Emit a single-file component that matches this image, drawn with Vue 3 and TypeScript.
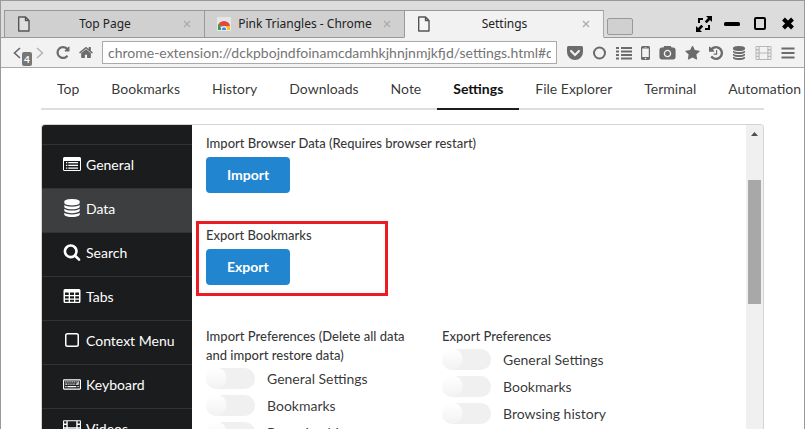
<script setup lang="ts">
import { ref } from 'vue'

interface Tab { title: string; icon: 'page' | 'store'; active: boolean }
interface Tool { name: string; width: number; box: string; path: string; faint?: boolean }
interface MenuEntry { label: string; box: string; path: string; active?: boolean }
interface Option { id: string; label: string; checked: boolean }

const databasePath =
  'M896 768q237 0 443-43t325-127v170q0 69-103 128t-280 93.5-385 34.5-385-34.5-280-93.5-103-128v-170q119 84 325 127t443 43zm0 768q237 0 443-43t325-127v170q0 69-103 128t-280 93.5-385 34.5-385-34.5-280-93.5-103-128v-170q119 84 325 127t443 43zm0-384q237 0 443-43t325-127v170q0 69-103 128t-280 93.5-385 34.5-385-34.5-280-93.5-103-128v-170q119 84 325 127t443 43zm0-1152q208 0 385 34.5t280 93.5 103 128v128q0 69-103 128t-280 93.5-385 34.5-385-34.5-280-93.5-103-128v-128q0-69 103-128t280-93.5 385-34.5z'
const filmPath =
  'M1 0h14a1 1 0 0 1 1 1v12a1 1 0 0 1-1 1H1a1 1 0 0 1-1-1V1a1 1 0 0 1 1-1zM1 1v2h2V1zM1 4.400v2h2v-2zM1 7.700v2h2v-2zM1 11v2h2v-2zM13 1v2h2V1zM13 4.400v2h2v-2zM13 7.700v2h2v-2zM13 11v2h2v-2zM4.200 1v5.400h7.600V1zM4.200 7.600V13h7.600V7.600z'

const tabs: Tab[] = [
  { title: 'Top Page', icon: 'page', active: false },
  { title: 'Pink Triangles - Chrome', icon: 'store', active: false },
  { title: 'Settings', icon: 'page', active: true },
]

const tools: Tool[] = [
  { name: 'Pocket', width: 16, box: '0 0 16 14', path: 'M1.500 0h13A1.500 1.500 0 0 1 16 1.500V6a8 8 0 0 1-16 0V1.500A1.500 1.500 0 0 1 1.500 0zM4.800 4.200a1 1 0 0 0-1.500 1.500L8 10.400l4.700-4.700a1 1 0 0 0-1.500-1.500L8 7.400z' },
  { name: 'Circle', width: 15, box: '0 0 15 14', path: 'M7.500.5a6.500 6.500 0 1 1 0 13 6.500 6.500 0 0 1 0-13zm0 2a4.500 4.500 0 1 0 0 9 4.500 4.500 0 0 0 0-9z' },
  { name: 'List', width: 16, box: '0 0 16 14', path: 'M0 1h3v2H0zM5 1h11v2H5zM0 4.500h3v2H0zM5 4.500h11v2H5zM0 8h3v2H0zM5 8h11v2H5zM0 11.500h3v2H0zM5 11.500h11v2H5z' },
  { name: 'Mobile', width: 9, box: '0 0 9 14', path: 'M1.500 0h6A1.500 1.500 0 0 1 9 1.500v11A1.500 1.500 0 0 1 7.500 14h-6A1.500 1.500 0 0 1 0 12.500v-11A1.500 1.500 0 0 1 1.500 0zM1.200 2.500V11h6.600V2.500zM3.500 1v.6h2V1zM4.500 11.700a.8.8 0 1 0 0 1.600.8.8 0 0 0 0-1.600z' },
  { name: 'Screenshot', width: 17, box: '-64 64 1920 1664', path: 'M896 672q119 0 203.5 84.5t84.5 203.5-84.5 203.5-203.5 84.5-203.5-84.5-84.5-203.5 84.5-203.5 203.5-84.5zm704-416q106 0 181 75t75 181v896q0 106-75 181t-181 75h-1408q-106 0-181-75t-75-181v-896q0-106 75-181t181-75h224l51-136q19-49 69.5-84.5t103.5-35.5h512q53 0 103.5 35.5t69.5 84.5l51 136h224zm-704 1152q185 0 316.5-131.5t131.5-316.5-131.5-316.5-316.5-131.5-316.5 131.5-131.5 316.5 131.5 316.5 316.5 131.5z' },
  { name: 'Favorite', width: 15, box: '64 64 1664 1600', path: 'M1728 647q0 22-26 48l-363 354 86 500q1 7 1 20 0 21-10.5 35.5t-30.5 14.5q-19 0-40-12l-449-236-449 236q-22 12-40 12-21 0-31.500-14.500t-10.500-35.500q0-6 2-20l86-500-364-354q-25-27-25-48 0-37 56-46l502-73 225-455q19-41 49-41t49 41l225 455 502 73q56 9 56 46z' },
  { name: 'History', width: 14, box: '128 128 1536 1536', path: 'M1664 896q0 156-61 298t-164 245-245 164-298 61q-172 0-327-72.500t-264-204.500q-7-10-6.500-22.500t8.500-20.500l137-138q10-9 25-9 16 2 23 12 73 95 179 147t225 52q104 0 198.500-40.500t163.500-109.500 109.500-163.500 40.500-198.500-40.500-198.500-109.500-163.500-163.500-109.500-198.500-40.500q-98 0-188 35.500t-160 101.500l137 138q31 30 14 69-17 40-59 40h-448q-26 0-45-19t-19-45v-448q0-42 40-59 39-17 69 14l130 129q107-101 244.500-156.500t284.500-55.500q156 0 298 61t245 164 164 245 61 298zm-640-288v448q0 14-9 23t-23 9h-320q-14 0-23-9t-9-23v-64q0-14 9-23t23-9h224v-352q0-14 9-23t23-9h64q14 0 23 9t9 23z' },
  { name: 'Data', width: 14, box: '128 0 1536 1792', path: databasePath },
  { name: 'Video', width: 17, box: '0 0 16 14', path: filmPath, faint: true },
  { name: 'Menu', width: 14, box: '0 0 14 14', path: 'M.5 1.500h13v2H.5zM.5 6h13v2H.5zM.5 10.500h13v2H.5z' },
]

const sections = ['Top', 'Bookmarks', 'History', 'Downloads', 'Note', 'Settings', 'File Explorer', 'Terminal', 'Automation']
const currentSection = ref('Settings')

const menu: MenuEntry[] = [
  { label: 'General', box: '0 -1 18 18', path: 'M1.500 1h15A1.500 1.500 0 0 1 18 2.500v11a1.500 1.500 0 0 1-1.500 1.500h-15A1.500 1.500 0 0 1 0 13.500v-11A1.500 1.500 0 0 1 1.500 1zM1 5v9h16V5zM3 6h1.300v1.300H3zM5.300 6H15v1.300H5.300zM3 8.700h1.300V10H3zM5.300 8.700H15V10H5.300zM3 11.400h1.300v1.300H3zM5.300 11.400H15v1.300H5.300z' },
  { label: 'Data', box: '0 0 1792 1792', path: databasePath, active: true },
  { label: 'Search', box: '0 0 1792 1792', path: 'M1216 832q0-185-131.500-316.500t-316.500-131.500-316.500 131.500-131.500 316.500 131.500 316.500 316.500 131.500 316.500-131.500 131.500-316.500zm512 832q0 52-38 90t-90 38q-54 0-90-38l-343-342q-179 124-399 124-143 0-273.500-55.500t-225-150-150-225-55.500-273.500 55.500-273.500 150-225 225-150 273.500-55.500 273.500 55.500 225 150 150 225 55.500 273.500q0 220-124 399l343 343q37 37 37 90z' },
  { label: 'Tabs', box: '0 -1 18 18', path: 'M2 1h14a1.500 1.500 0 0 1 1.500 1.500v11A1.500 1.500 0 0 1 16 15H2a1.500 1.500 0 0 1-1.500-1.500v-11A1.500 1.500 0 0 1 2 1zM2 4.500V7h3.700V4.500zM7 4.500V7h4V4.500zM12.300 4.500V7H16V4.500zM2 8.200v2.300h3.700V8.200zM7 8.200v2.300h4V8.200zM12.300 8.200v2.300H16V8.200zM2 11.700v2h3.700v-2zM7 11.700v2h4v-2zM12.300 11.700v2H16v-2z' },
  { label: 'Context Menu', box: '0 0 18 18', path: 'M4.500 2h9A2.500 2.500 0 0 1 16 4.500v9a2.500 2.500 0 0 1-2.500 2.500h-9A2.500 2.500 0 0 1 2 13.500v-9A2.500 2.500 0 0 1 4.500 2zM4.500 3.500a1 1 0 0 0-1 1v9a1 1 0 0 0 1 1h9a1 1 0 0 0 1-1v-9a1 1 0 0 0-1-1z' },
  { label: 'Keyboard', box: '0 -1 19 18', path: 'M1.200 3h16.600A1.200 1.200 0 0 1 19 4.200v8.600a1.200 1.200 0 0 1-1.200 1.200H1.200A1.200 1.200 0 0 1 0 12.800V4.200A1.200 1.200 0 0 1 1.200 3zM1.200 4.200v8.600h16.600V4.200zM2.400 5.200h1.300v1.300H2.400zM4.600 5.200h1.300v1.300H4.600zM6.800 5.200h1.300v1.300H6.800zM9 5.200h1.300v1.300H9zM11.200 5.200h1.300v1.300h-1.300zM13.400 5.200h1v1.300h-1zM15.300 5.200h1.300v3.600h-2.900V7.500h1.600zM2.400 7.500h2.300v1.300H2.400zM5.600 7.500h1.300v1.300H5.600zM7.800 7.500h1.300v1.300H7.800zM10 7.500h1.300v1.300H10zM12 7.500h1v1.300h-1zM2.400 10h1.300v1.300H2.400zM4.600 10h9.400v1.300H4.600zM15.300 10h1.300v1.300h-1.300z' },
  { label: 'Videos', box: '0 -1 16 16', path: filmPath },
]

const address = ref('chrome-extension://dckpbojndfoinamcdamhkjhnjnmjkfjd/settings.html#data')

const importOptions = ref<Option[]>([
  { id: 'import-general', label: 'General Settings', checked: false },
  { id: 'import-bookmarks', label: 'Bookmarks', checked: false },
  { id: 'import-history', label: 'Browsing history', checked: false },
])
const exportOptions = ref<Option[]>([
  { id: 'export-general', label: 'General Settings', checked: false },
  { id: 'export-bookmarks', label: 'Bookmarks', checked: false },
  { id: 'export-history', label: 'Browsing history', checked: false },
])
</script>

<template>
  <div class="window">
    <header class="tab-strip">
      <div v-for="tab in tabs" :key="tab.title" class="tab" :class="{ active: tab.active }">
        <svg v-if="tab.icon === 'page'" class="favicon" viewBox="0 0 14 16" aria-hidden="true">
          <path d="M1.700 1h6.800L12 4.500V15H1.700z M8.500 1v3.500H12" fill="#fff" fill-opacity=".35" stroke="#555" stroke-width="1.400" stroke-linejoin="round" />
        </svg>
        <svg v-else class="favicon" viewBox="0 0 14 14" aria-hidden="true">
          <path d="M0 0h14v14H0z" fill="#e6e6e6" />
          <path d="M1 9.500a6 5.500 0 0 1 12 0H7z" fill="#dd4b39" />
          <path d="M1 9l1-2L5 13H1z" fill="#2ba24c" />
          <path d="M9 9h4v4H8z" fill="#fbc116" />
          <path d="M3.800 13a3.200 3.800 0 0 1 6.400 0z" fill="#fff" />
          <path d="M4.700 13a2.300 2.800 0 0 1 4.600 0z" fill="#4285f4" />
        </svg>
        <span class="tab-title">{{ tab.title }}</span>
        <button class="tab-close" type="button" aria-label="Close tab">
          <svg viewBox="0 0 8 8"><path d="M1 1l6 6M7 1L1 7" stroke="currentColor" stroke-width="1.200" /></svg>
        </button>
      </div>
      <button class="new-tab" type="button" aria-label="New tab"></button>
      <div class="window-controls">
        <button type="button" aria-label="Full screen">
          <svg viewBox="0 0 16 16">
            <path d="M10 0h6v6l-2-2-3.300 3.300-1.900-1.900L12 2.100zM6 16H0v-6l2 2 3.300-3.300 1.900 1.900L4 13.900z" />
            <path d="M3 7V3h4M13 9v4H9" fill="none" stroke="#000" stroke-width="2" />
          </svg>
        </button>
        <button type="button" aria-label="Minimize">
          <svg viewBox="0 0 16 16"><rect x="0" y="6" width="16" height="4" rx="1.500" /></svg>
        </button>
        <button type="button" aria-label="Maximize">
          <svg viewBox="0 0 16 16"><rect x="3" y="2" width="10" height="11" rx="1" fill="none" stroke="#000" stroke-width="2" /></svg>
        </button>
        <button type="button" aria-label="Close window">
          <svg viewBox="0 0 16 16"><path d="M3.500 3l9 9M12.500 3l-9 9" stroke="#000" stroke-width="4" /></svg>
        </button>
      </div>
    </header>

    <div class="toolbar">
      <div class="history-buttons">
        <button type="button" class="step" aria-label="Back">
          <svg viewBox="0 0 8 12"><path d="M7 1L1.500 6 7 11" fill="none" stroke="#666" stroke-width="1.600" /></svg>
          <span class="badge">4</span>
        </button>
        <button type="button" class="step" aria-label="Forward">
          <svg viewBox="0 0 8 12"><path d="M1 1l5.500 5L1 11" fill="none" stroke="#b5b5b5" stroke-width="1.600" /></svg>
        </button>
      </div>
      <button type="button" class="nav-icon" aria-label="Reload">
        <svg viewBox="128 128 1536 1536"><path d="M1664 256v448q0 26-19 45t-45 19h-448q-42 0-59-40-17-39 14-69l138-138q-148-137-349-137-104 0-198.500 40.500t-163.500 109.500-109.500 163.500-40.500 198.500 40.500 198.500 109.500 163.500 163.500 109.500 198.500 40.500q119 0 225-52t179-147q7-10 23-12 15 0 25 9l137 138q9 8 9.500 20.500t-7.500 22.500q-109 132-264 204.500t-327 72.500q-156 0-298-61t-245-164-164-245-61-298 61-298 164-245 245-164 298-61q147 0 284.500 55.500t244.500 156.500l130-129q29-31 70-14 39 17 39 59z" /></svg>
      </button>
      <button type="button" class="nav-icon" aria-label="Home">
        <svg viewBox="64 128 1664 1536"><path d="M1472 992v480q0 26-19 45t-45 19h-384v-384h-256v384h-384q-26 0-45-19t-19-45v-480q0-1 .5-3t.5-3l575-474 575 474q1 2 1 6zm223-69l-62 74q-8 9-21 11h-3q-13 0-21-7l-692-577-692 577q-12 8-24 7-13-2-21-11l-62-74q-8-10-7-23.500t11-21.500l719-599q32-26 76-26t76 26l244 204v-195q0-14 9-23t23-9h192q14 0 23 9t9 23v408l219 182q10 8 11 21.500t-7 23.500z" /></svg>
      </button>
      <input v-model="address" class="address" type="text" aria-label="Address" spellcheck="false" />
      <div class="tools">
        <button
          v-for="tool in tools"
          :key="tool.name"
          type="button"
          class="tool"
          :class="{ faint: tool.faint }"
          :style="{ width: tool.width + 'px' }"
          :aria-label="tool.name"
        >
          <svg :viewBox="tool.box"><path :d="tool.path" fill-rule="evenodd" /></svg>
        </button>
      </div>
    </div>

    <main class="page">
      <nav class="sections">
        <a
          v-for="section in sections"
          :key="section"
          href="#"
          :class="{ current: section === currentSection }"
          @click.prevent="currentSection = section"
        >{{ section }}</a>
      </nav>

      <div class="panel">
        <nav class="side-menu">
          <a v-for="entry in menu" :key="entry.label" href="#" :class="{ active: entry.active }" @click.prevent>
            <svg :viewBox="entry.box" aria-hidden="true"><path :d="entry.path" fill-rule="evenodd" /></svg>
            <span>{{ entry.label }}</span>
          </a>
        </nav>

        <div class="content">
          <section class="field">
            <label for="import-data">Import Browser Data (Requires browser restart)</label>
            <button id="import-data" class="primary" type="button">Import</button>
          </section>
          <section class="field marked">
            <label for="export-data">Export Bookmarks</label>
            <button id="export-data" class="primary" type="button">Export</button>
          </section>
          <div class="preferences">
            <fieldset>
              <legend>Import Preferences (Delete all data and import restore data)</legend>
              <div v-for="option in importOptions" :key="option.id" class="option">
                <input :id="option.id" v-model="option.checked" type="checkbox" />
                <label :for="option.id">{{ option.label }}</label>
              </div>
            </fieldset>
            <fieldset>
              <legend>Export Preferences</legend>
              <div v-for="option in exportOptions" :key="option.id" class="option">
                <input :id="option.id" v-model="option.checked" type="checkbox" />
                <label :for="option.id">{{ option.label }}</label>
              </div>
            </fieldset>
          </div>
        </div>

        <div class="scrollbar" aria-hidden="true">
          <svg viewBox="0 0 7 4"><path d="M3.500 0L7 4H0z" /></svg>
          <div class="thumb"></div>
        </div>
      </div>
    </main>
  </div>
</template>

<style>
body {
  overflow: hidden;
}
</style>

<style scoped>
* {
  box-sizing: border-box;
}

.window {
  display: flex;
  flex-direction: column;
  height: 100vh;
  overflow: hidden;
  border: 1px solid #999;
  border-bottom: 0;
  background: #fff;
  color: rgba(0, 0, 0, 0.8);
  font: 14px/18px Lato, "Liberation Sans", sans-serif;
}

button {
  padding: 0;
  border: 0;
  background: none;
  font: inherit;
  color: inherit;
}

svg {
  display: block;
}

a {
  color: inherit;
  text-decoration: none;
}

/* Tabs and window buttons */
.tab-strip {
  display: flex;
  flex: none;
  align-items: flex-end;
  height: 37px;
  padding-left: 3px;
  background: #dcdcdc;
  box-shadow: inset 0 -1px #999;
}

.tab {
  display: flex;
  align-items: center;
  flex: 0 1 200px;
  min-width: 0;
  height: 28px;
  padding: 0 13px 0 12px;
  border: 1px solid #999;
  border-right: 0;
  background: #d0d0d0;
}

.tab.active {
  border-right: 1px solid #aaa;
  border-bottom-color: #f2f2f2;
  background: #f2f2f2;
}

.favicon {
  flex: none;
  width: 14px;
  height: 16px;
}

.tab-title {
  flex: 1;
  overflow: hidden;
  margin: 0 8px 0 4px;
  color: #222;
  font: 12px/18px "Noto Sans", "Open Sans", sans-serif;
  text-align: center;
  white-space: nowrap;
}

.tab-close {
  flex: none;
  width: 8px;
  color: #aaa;
}

.new-tab {
  width: 26px;
  height: 17px;
  margin: 0 0 3px 3px;
  border: 1px solid #999;
  border-radius: 2px;
  background: #d0d0d0;
}

.window-controls {
  display: flex;
  align-self: center;
  gap: 12px;
  margin-left: auto;
  padding: 8px 8px 0 0;
}

.window-controls button {
  width: 16px;
  height: 16px;
}

/* Address bar */
.toolbar {
  display: flex;
  flex: none;
  align-items: center;
  height: 30px;
  padding: 0 9px 0 12px;
  border-bottom: 1px solid #aaa;
  background: #f2f2f2;
  fill: #6b6b6b;
}

.history-buttons {
  display: flex;
  gap: 15px;
  margin-right: 12px;
}

.step {
  position: relative;
  width: 8px;
}

.badge {
  position: absolute;
  top: 5px;
  left: 9px;
  width: 10px;
  height: 14px;
  border-radius: 2px;
  background: #777;
  color: #fff;
  font: bold 10px/14px Lato, sans-serif;
}

.nav-icon {
  width: 14px;
  margin-right: 9px;
}

.nav-icon svg {
  width: 100%;
  height: 13px;
}

.address {
  flex: 1;
  min-width: 0;
  height: 23px;
  margin-right: 10px;
  padding: 0 5px;
  border: 1px solid #aaa;
  outline: 0;
  background: #fff;
  color: #757575;
  font: 14px/20px Lato, sans-serif;
}

.tools {
  display: flex;
  flex: none;
  gap: 9px;
}

.tool svg {
  width: 100%;
  height: 14px;
}

.tool.faint {
  fill: #b8b8b8;
}

/* Page */
.page {
  display: flex;
  flex: 1;
  flex-direction: column;
  min-height: 0;
  padding: 0 40px;
}

.sections {
  display: flex;
  flex: none;
  height: 42px;
  border-bottom: 2px solid #dedede;
}

.sections a {
  height: 42px;
  padding: 12px 16px 0;
  white-space: nowrap;
}

.sections .current {
  border-bottom: 2px solid #1b1c1d;
  color: #111;
  font-weight: bold;
}

.panel {
  display: flex;
  flex: 1;
  min-height: 0;
  overflow: hidden;
  margin-top: 14px;
  border: 1px solid #d4d4d5;
  border-bottom: 0;
  border-radius: 4px 4px 0 0;
}

.side-menu {
  flex: none;
  width: 150px;
  padding-top: 19px;
  background: #1b1c1d;
  color: #fff;
  fill: #fff;
}

.side-menu a {
  display: flex;
  align-items: center;
  gap: 5px;
  height: 44px;
  padding: 0 0 6px 21px;
  border-top: 1px solid #323334;
}

.side-menu a span {
  padding-top: 2px;
}

.side-menu a.active {
  background: #3d3e3f;
}

.side-menu svg {
  width: 18px;
  height: 18px;
}

.content {
  flex: 1;
  min-width: 0;
  padding: 9px 14px 0;
}

.field {
  position: relative;
  margin-bottom: 33px;
}

.field label,
legend {
  font-size: 13px;
  font-weight: 500;
  line-height: 19px;
}

.field label {
  display: block;
  margin-bottom: 4px;
}

.primary {
  display: block;
  height: 36px;
  padding: 0 21px;
  border-radius: 4px;
  background: #2185d0;
  color: #fff;
  font-weight: bold;
}

.marked::after {
  box-sizing: border-box;
  position: absolute;
  top: -5px;
  left: -10px;
  width: 192px;
  height: 75px;
  border: 3px solid #ed1c24;
  content: "";
  pointer-events: none;
}

.preferences {
  display: grid;
  grid-template-columns: 1fr 1fr;
  max-width: 472px;
  padding-top: 9px;
}

fieldset {
  min-width: 0;
  margin: 0;
  padding: 0 16px 0 0;
  border: 0;
}

legend {
  padding: 0;
  margin-bottom: 3px;
}

.option {
  display: flex;
  align-items: center;
  gap: 12px;
  height: 21px;
  margin-bottom: 6px;
}

.option input {
  width: 49px;
  height: 21px;
  margin: 0;
  border-radius: 11px;
  background: radial-gradient(circle at 10px 10px, transparent 10px, #f0f0f0 11px), linear-gradient(#fff, #f2f2f2);
  appearance: none;
}

.scrollbar {
  flex: none;
  width: 17px;
  padding: 7px 2px 0;
  background: #f0f0f0;
}

.scrollbar svg {
  width: 7px;
  height: 4px;
  margin: 0 auto 44px;
  fill: #505050;
}

.thumb {
  height: 124px;
  background: #a8a8a8;
}
</style>
